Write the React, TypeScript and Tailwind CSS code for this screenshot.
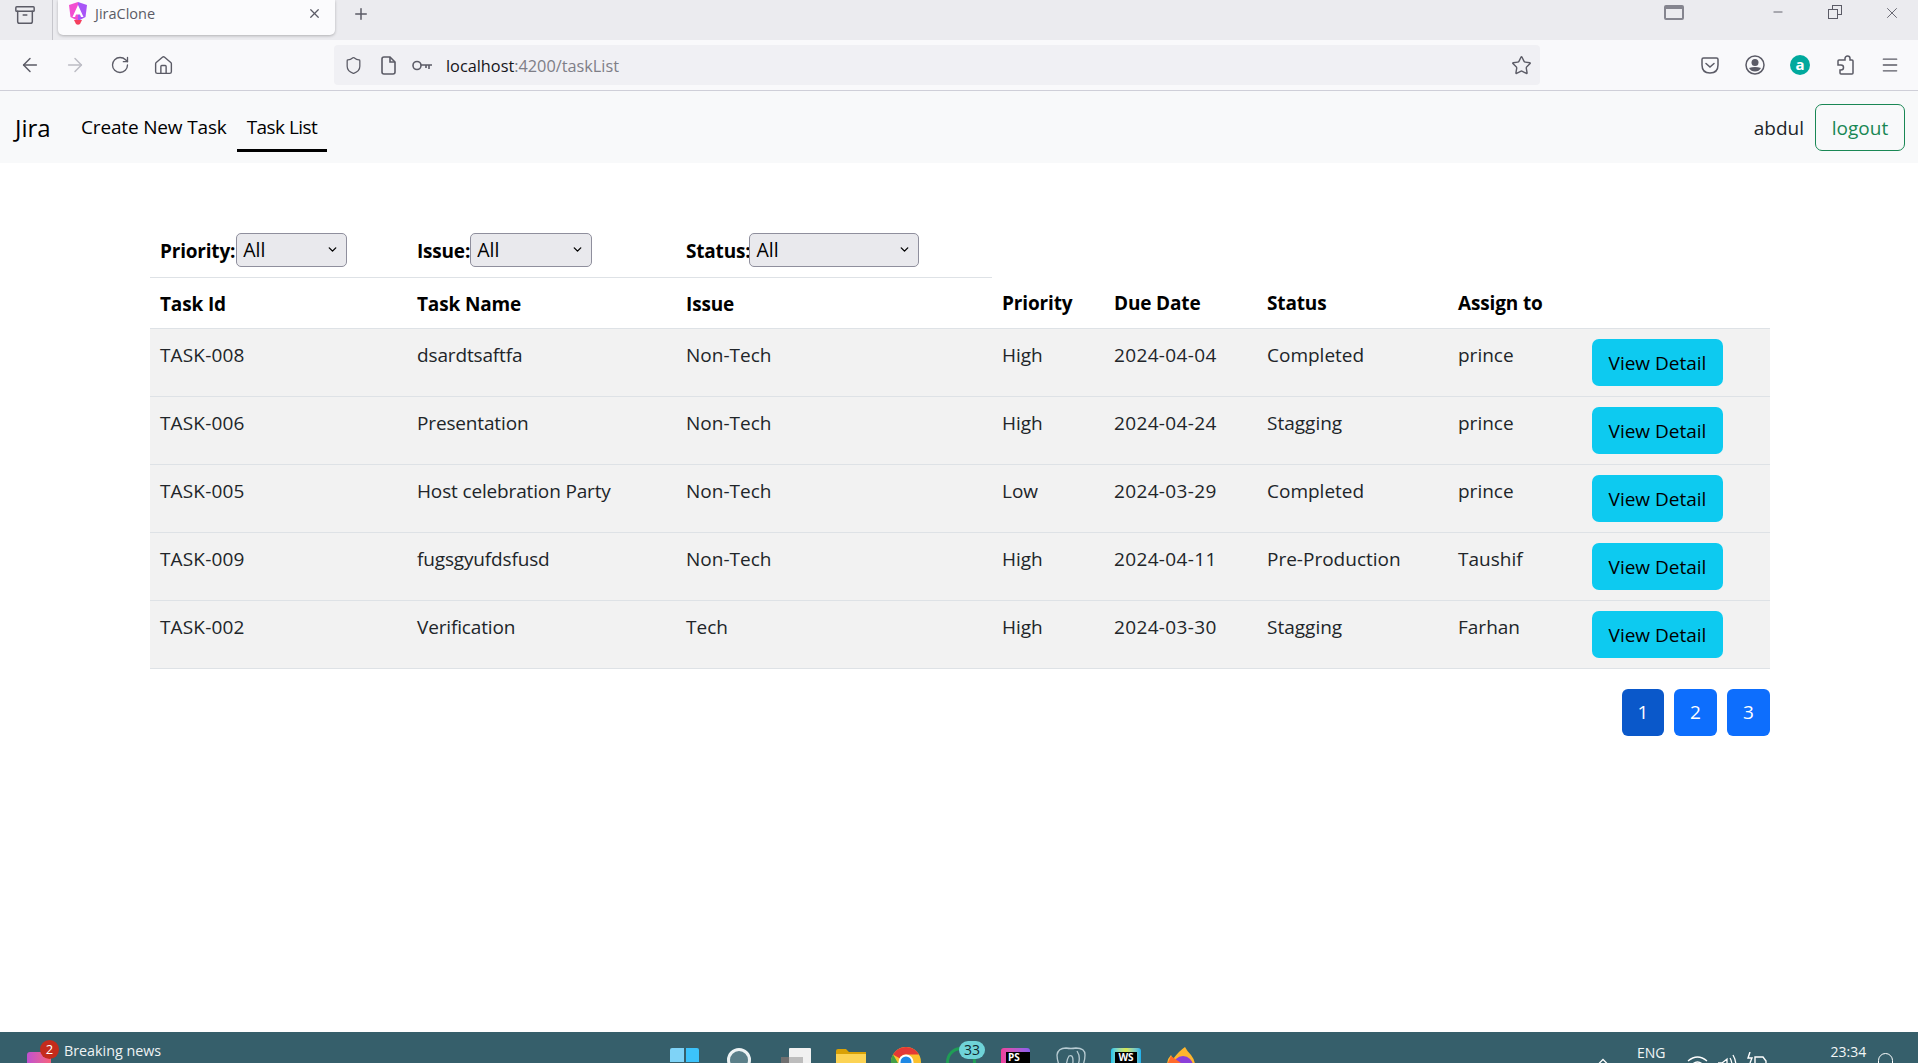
import { ArrowLeft, ArrowRight, RotateCw, Home, Shield, Star, Menu, X, Plus, Minus, Archive, ChevronDown } from 'lucide-react';

const tasks = [
  { id: 'TASK-008', name: 'dsardtsaftfa', issue: 'Non-Tech', priority: 'High', due: '2024-04-04', status: 'Completed', assign: 'prince' },
  { id: 'TASK-006', name: 'Presentation', issue: 'Non-Tech', priority: 'High', due: '2024-04-24', status: 'Stagging', assign: 'prince' },
  { id: 'TASK-005', name: 'Host celebration Party', issue: 'Non-Tech', priority: 'Low', due: '2024-03-29', status: 'Completed', assign: 'prince' },
  { id: 'TASK-009', name: 'fugsgyufdsfusd', issue: 'Non-Tech', priority: 'High', due: '2024-04-11', status: 'Pre-Production', assign: 'Taushif' },
  { id: 'TASK-002', name: 'Verification', issue: 'Tech', priority: 'High', due: '2024-03-30', status: 'Stagging', assign: 'Farhan' },
];

const headers = ['Task Id', 'Task Name', 'Issue', 'Priority', 'Due Date', 'Status', 'Assign to', ''];

function AngularLogo() {
  return (
    <svg width="20" height="24" viewBox="0 0 20 24">
      <path d="M10 0 L1 3 L2.5 15 L10 19 Z" fill="#f24fd1" />
      <path d="M10 0 L19 3 L17.5 15 L10 19 Z" fill="#a855f7" />
      <path d="M10 3 L4.5 15 H7 L8 12.5 H12 L13 15 H15.5 Z" fill="#fff" />
      <path d="M6 18 H14 L12 22 Q10 23.5 8 22 Z" fill="#f43f5e" />
    </svg>
  );
}

function Pocket() {
  return (
    <svg width="18" height="17" viewBox="0 0 18 17" fill="none" stroke="#5b5b66" strokeWidth="1.5">
      <path d="M1 2.5 Q1 1 2.5 1 H15.5 Q17 1 17 2.5 V8 Q17 16 9 16 Q1 16 1 8 Z" />
      <path d="M5 6.5 L9 10 L13 6.5" strokeLinecap="round" />
    </svg>
  );
}

function Account() {
  return (
    <svg width="20" height="20" viewBox="0 0 20 20" className="ml-[26px]">
      <circle cx="10" cy="10" r="9" fill="none" stroke="#5b5b66" strokeWidth="1.5" />
      <circle cx="10" cy="7.5" r="3.5" fill="#5b5b66" />
      <path d="M4 13 Q10 11 16 13 Q14 16.5 10 16.5 Q6 16.5 4 13 Z" fill="#5b5b66" />
    </svg>
  );
}

function PuzzlePiece() {
  return (
    <svg width="20" height="20" viewBox="0 0 20 20" fill="none" stroke="#5b5b66" strokeWidth="1.5" className="ml-[25px]">
      <path d="M10 5 V3.5 A2.5 2.5 0 0 1 15 3.5 V5 H17 Q18 5 18 6 V18 Q18 19 17 19 H6 Q5 19 5 18 V15 H6 A2.5 2.5 0 0 0 6 10 H3 V6 Q3 5 4 5 Z" />
    </svg>
  );
}

function TaskbarIcons() {
  return (
    <>
      {/* windows */}
      <div className="ml-[496px] mt-[16px] grid grid-cols-2 gap-[2px] w-[29px]">
        <div className="h-[14px] bg-[#7fd3f7] rounded-tl-[2px]" />
        <div className="h-[14px] bg-[#3cc3fb] rounded-tr-[2px]" />
        <div className="h-[14px] bg-[#3cc3fb]" />
        <div className="h-[14px] bg-[#1aa7ec]" />
      </div>
      {/* search */}
      <div className="ml-[28px] mt-[16px] w-[24px] h-[24px] rounded-full border-[3px] border-[#eef3f4] bg-[#5b7f89] shrink-0" />
      {/* task view */}
      <svg className="ml-[30px] mt-[16px] shrink-0" width="30" height="20" viewBox="0 0 30 20">
        <rect x="8" y="0" width="22" height="20" rx="1" fill="#f1f1f1" />
        <rect x="0" y="9" width="22" height="11" fill="#6f6f6f" />
        <rect x="8" y="9" width="14" height="11" fill="#bdbdbd" />
      </svg>
      {/* folder */}
      <svg className="ml-[25px] mt-[17px] shrink-0" width="30" height="20" viewBox="0 0 30 20">
        <path d="M0 2 Q0 0 2 0 H10 L13 3 H30 V8 H0 Z" fill="#d9a106" />
        <path d="M0 5 H30 V20 H0 Z" fill="#fcd354" />
      </svg>
      {/* chrome */}
      <svg className="ml-[25px] mt-[15px] shrink-0" width="30" height="30" viewBox="0 0 30 30">
        <circle cx="15" cy="15" r="15" fill="#fbc02d" />
        <path d="M15 0 A15 15 0 0 1 28 7.5 L15 7.5 A7.5 7.5 0 0 0 8.5 11.2 L2 7.5 A15 15 0 0 1 15 0 Z" fill="#e53935" />
        <path d="M2 7.5 L8.5 18.7 L15 30 A15 15 0 0 1 2 7.5 Z" fill="#43a047" />
        <circle cx="15" cy="15" r="7.5" fill="#fff" />
        <circle cx="15" cy="15" r="5.5" fill="#1e88e5" />
      </svg>
      {/* whatsapp + badge */}
      <div className="relative ml-[25px] mt-[15px] w-[30px] h-[30px] shrink-0">
        <div className="w-[30px] h-[30px] rounded-full border-[3px] border-[#1f9d55]" />
        <span className="absolute left-[13px] top-[-6px] w-[26px] h-[18px] rounded-full bg-[#6fd3d8] text-[#10282e] text-[14px] leading-[18px] text-center">33</span>
      </div>
      {/* phpstorm */}
      <div className="ml-[25px] mt-[16px] w-[29px] h-[15px] shrink-0 rounded-t-[3px] bg-gradient-to-r from-[#ef3f9b] to-[#8a5cf0] pt-[4px] pl-[5px]">
        <div className="bg-black h-[11px] text-white text-[10px] font-bold leading-[10px] pl-[2px]">PS</div>
      </div>
      {/* postgres */}
      <svg className="ml-[26px] mt-[15px] shrink-0" width="30" height="30" viewBox="0 0 30 30" fill="none" stroke="#b8ccd3" strokeWidth="1.3">
        <path d="M8 29 Q1 16 1 8 Q2 1 10 1 Q15 2 20 1 Q29 1 29 8 Q29 16 23 27" />
        <path d="M11 29 Q9 15 13 9 Q17 7 17 14 L16 29" />
        <path d="M21 4 Q25 10 22 18" />
      </svg>
      {/* webstorm */}
      <div className="ml-[25px] mt-[16px] w-[30px] h-[15px] shrink-0 rounded-t-[3px] bg-gradient-to-r from-[#16c5f0] via-[#d8e84a] to-[#16b0f0] pt-[4px] px-[4px]">
        <div className="bg-black h-[11px] text-white text-[10px] font-bold leading-[10px] text-center">WS</div>
      </div>
      {/* firefox */}
      <svg className="ml-[26px] mt-[15px] shrink-0" width="28" height="30" viewBox="0 0 28 30">
        <path d="M18 0 Q20 4 24 8 Q28 13 28 18 A14 12 0 0 1 0 18 Q0 12 4 8 L6 12 Q12 4 18 0 Z" fill="#ffb62e" />
        <circle cx="16" cy="19" r="10" fill="#8b3fd9" />
        <path d="M0 18 L4 9 L14 16 L8 22 L12 28 A14 12 0 0 1 0 18 Z" fill="#ff6a2b" />
      </svg>
    </>
  );
}

function TrayIcons() {
  return (
    <>
      <svg className="ml-[402px] mt-[26px] shrink-0" width="12" height="8" viewBox="0 0 12 8" fill="none" stroke="#fff" strokeWidth="1.3">
        <path d="M1 6.5 L6 1.5 L11 6.5" />
      </svg>
      <span className="ml-[28px] mt-[12px] text-[14px] leading-[18px] text-[#f2f6f7]">ENG</span>
      <svg className="ml-[21px] mt-[23px] shrink-0" width="21" height="16" viewBox="0 0 21 16" fill="none" stroke="#fff" strokeWidth="1.3">
        <path d="M1 6 Q10.5 -2 20 6" />
        <path d="M4.5 10 Q10.5 4 16.5 10" />
      </svg>
      <svg className="ml-[9px] mt-[22px] shrink-0" width="20" height="16" viewBox="0 0 20 16" fill="none" stroke="#fff" strokeWidth="1.3">
        <path d="M1 9 H5 L10 5 V16" />
        <path d="M13 4 Q15 7 15 12" />
        <path d="M16 1 Q19 6 19 13" />
      </svg>
      <svg className="ml-[10px] mt-[20px] shrink-0" width="20" height="16" viewBox="0 0 20 16" fill="none" stroke="#fff" strokeWidth="1.4">
        <path d="M3 0 L1 6 H5 L3 11" />
        <path d="M8 5 H16 L19 9 V16 H8 Z" />
      </svg>
      <span className="ml-[64px] mt-[11px] text-[14px] leading-[18px] text-[#f2f6f7]">23:34</span>
      <div className="ml-[12px] mt-[21px] w-[15px] h-[24px] rounded-full border-[1.5px] border-white shrink-0" />
    </>
  );
}

function Filter({ label, width, gap }: { label: string; width: string; gap: string }) {
  return (
    <div className="flex items-center whitespace-nowrap">
      <span className={`mt-[2px] tracking-[-0.2px] ${gap}`}>{label}</span>
      <div className={`relative ${width}`}>
        <select className="appearance-none w-full h-[34px] pl-[6px] text-[19.5px] font-normal bg-[#e9e9ed] border border-[#8f8f9d] rounded-[5px]"><option>All</option></select>
        <ChevronDown size={13} strokeWidth={2.5} className="absolute right-[8px] top-[10px] pointer-events-none" />
      </div>
    </div>
  );
}

export default function App() {
  return (
    <div className="h-[1063px] w-[1918px] flex flex-col overflow-hidden bg-white text-[#212529] font-['Open_Sans','Noto_Sans',sans-serif] text-[19px] leading-[30px]">
      {/* tab strip */}
      <div className="h-[40px] bg-[#ebebef] flex shrink-0 text-[#5b5b66]">
        <div className="w-[53px] h-[40px] border-r border-[#c6c6cc] flex items-start pt-[4px] pl-[14px]">
          <Archive size={22} strokeWidth={1.6} />
        </div>
        <div className="ml-[5px] w-[277px] h-[35px] bg-[#fbfbfd] rounded-b-[5px] shadow-[0_1px_3px_rgba(0,0,0,0.25)] flex items-start pt-[2px] pl-[10px] pr-[13px]">
          <AngularLogo />
          <span className="ml-[7px] text-[#5b5b66] text-[14.5px] leading-[24px]">JiraClone</span>
          <X size={15} className="ml-auto mt-[4px]" />
        </div>
        <Plus size={18} className="ml-[17px] mt-[5px]" />
        <div className="ml-auto flex items-start">
          <div className="mt-[5px] w-[20px] h-[15px] rounded-[2px] border-2 border-[#85858f] border-t-[4px] bg-[#ebebef]" />
          <Minus size={14} strokeWidth={1.6} className="ml-[87px] mt-[5px]" />
          <div className="ml-[43px] mt-[5px] relative w-[14px] h-[14px]">
            <div className="absolute right-0 top-0 w-[10px] h-[10px] border border-[#5b5b66]" />
            <div className="absolute left-0 bottom-0 w-[10px] h-[10px] border border-[#5b5b66] bg-[#ebebef]" />
          </div>
          <X size={18} strokeWidth={1.2} className="ml-[41px] mt-[4px] mr-[17px]" />
        </div>
      </div>

      {/* toolbar */}
      <div className="h-[51px] bg-[#f9f9fb] border-b-[1.5px] border-[#cfcfd8] flex items-center shrink-0 text-[#5b5b66]">
        <ArrowLeft size={22} strokeWidth={1.6} className="ml-[19px]" />
        <ArrowRight size={22} strokeWidth={1.6} className="ml-[23px] text-[#bcbcc4]" />
        <RotateCw size={20} strokeWidth={1.6} className="ml-[24px]" />
        <Home size={21} strokeWidth={1.6} className="ml-[23px]" />
        <div className="ml-[160px] w-[1206px] h-[40px] bg-[#f0f0f4] rounded-[4px] flex items-center pl-[10px] pr-[8px]">
          <Shield size={19} strokeWidth={1.6} />
          <svg className="ml-[18px]" width="15" height="19" viewBox="0 0 15 19" fill="none" stroke="#5b5b66" strokeWidth="1.6">
            <path d="M1 3 Q1 1 3 1 H9 L14 6 V16 Q14 18 12 18 H3 Q1 18 1 16 Z" />
            <path d="M9 1 V6 H14" />
          </svg>
          <svg className="ml-[16px]" width="21" height="11" viewBox="0 0 21 11" fill="none" stroke="#5b5b66" strokeWidth="1.6">
            <circle cx="5" cy="5.5" r="4" />
            <path d="M9 5 H20 M17 5 V9 M14 5 V8" />
          </svg>
          <span className="ml-[13px] mt-[2px] text-[16.3px] text-[#15141a]">localhost<span className="text-[#7e7e87]">:4200/taskList</span></span>
          <Star size={21} strokeWidth={1.6} className="ml-auto" />
        </div>
        <div className="ml-auto flex items-center mr-[18px]">
          <Pocket />
          <Account />
          <div className="ml-[25px] w-[20px] h-[20px] rounded-full bg-[#00a99d] text-white text-[15px] leading-[18px] font-bold text-center">a</div>
          <PuzzlePiece />
          <Menu size={20} strokeWidth={1.6} className="ml-[25px]" />
        </div>
      </div>

      {/* app navbar */}
      <nav className="h-[72px] bg-[#f8f9fa] flex items-center pl-[15px] pr-[13px] shrink-0">
        <span className="text-[24px] text-black w-[56px] pt-[2px]">Jira</span>
        <a className="mt-[2px] px-[10px] h-[48px] flex items-center text-black border-b-[3px] border-transparent tracking-[-0.16px]">Create New Task</a>
        <a className="mt-[2px] px-[10px] h-[48px] flex items-center text-black border-b-[3px] border-black tracking-[-0.55px]">Task List</a>
        <span className="ml-auto mr-[11px] pt-[2px]">abdul</span>
        <button className="w-[90px] h-[47px] pt-[2px] rounded-[7px] border border-[#198754] text-[#198754]">logout</button>
      </nav>

      {/* task table */}
      <main className="flex-1 pt-[60px] pl-[150px]">
        <table className="w-[1620px] table-fixed border-collapse">
          <colgroup>
            <col className="w-[257px]" />
            <col className="w-[269px]" />
            <col className="w-[316px]" />
            <col className="w-[112px]" />
            <col className="w-[153px]" />
            <col className="w-[191px]" />
            <col className="w-[134px]" />
            <col />
          </colgroup>
          <thead>
            <tr>
              <td className="h-[54px] px-[10px] font-bold border-b border-[#dee2e6] text-black">
                <Filter label="Priority:" width="w-[111px]" gap="mr-px" />
              </td>
              <td className="px-[10px] font-bold border-b border-[#dee2e6] text-black">
                <Filter label="Issue:" width="w-[122px]" gap="mr-0" />
              </td>
              <td className="px-[10px] font-bold border-b border-[#dee2e6] text-black">
                <Filter label="Status:" width="w-[170px]" gap="mr-[-1px]" />
              </td>
            </tr>
            <tr className="border-b border-[#dee2e6]">
              {headers.map((h, i) => (
                <th key={i} className="px-[10px] pt-[11px] pb-[9px] text-left font-bold text-black whitespace-nowrap tracking-[-0.15px]">{h}</th>
              ))}
            </tr>
          </thead>
          <tbody>
            {tasks.map(t => (
              <tr key={t.id} className="bg-[#f2f2f2] border-b border-[#dee2e6]">
                <td className="px-[10px] pt-[11px] pb-[9px] align-top tracking-[0.15px]">{t.id}</td>
                <td className="px-[10px] pt-[11px] pb-[9px] align-top tracking-[-0.15px]">{t.name}</td>
                <td className="px-[10px] pt-[11px] pb-[9px] align-top">{t.issue}</td>
                <td className="px-[10px] pt-[11px] pb-[9px] align-top">{t.priority}</td>
                <td className="px-[10px] pt-[11px] pb-[9px] align-top tracking-[0.35px]">{t.due}</td>
                <td className="px-[10px] pt-[11px] pb-[9px] align-top whitespace-nowrap">{t.status}</td>
                <td className="px-[10px] pt-[11px] pb-[9px] align-top">{t.assign}</td>
                <td className="px-[10px] pt-[10px] pb-[10px] align-top">
                  <button className="w-[131px] h-[47px] pt-px rounded-[7px] bg-[#0dcaf0] text-black block">View Detail</button>
                </td>
              </tr>
            ))}
          </tbody>
        </table>
        <div className="w-[1620px] flex justify-end gap-[10px] mt-[20px]">
          <button className="w-[42px] h-[47px] rounded-[6px] bg-[#0a58ca] text-white">1</button>
          <button className="w-[43px] h-[47px] rounded-[6px] bg-[#0d6efd] text-white">2</button>
          <button className="w-[43px] h-[47px] rounded-[6px] bg-[#0d6efd] text-white">3</button>
        </div>
      </main>

      {/* windows taskbar */}
      <div className="h-[31px] bg-[#365f6b] flex items-start overflow-hidden shrink-0">
        <div className="relative ml-[27px] mt-[20px] w-[24px] h-[24px] shrink-0 rounded-[3px] bg-gradient-to-r from-[#c04fd0] to-[#f8607a]">
          <span className="absolute left-[13px] top-[-12px] w-[19px] h-[19px] rounded-full bg-[#c42b1c] text-white text-[13px] leading-[19px] text-center">2</span>
        </div>
        <span className="ml-[13px] mt-[10px] text-[14.3px] leading-[18px] text-[#eef3f4] whitespace-nowrap w-[110px]">Breaking news</span>
        <TaskbarIcons />
        <TrayIcons />
      </div>
    </div>
  );
}
